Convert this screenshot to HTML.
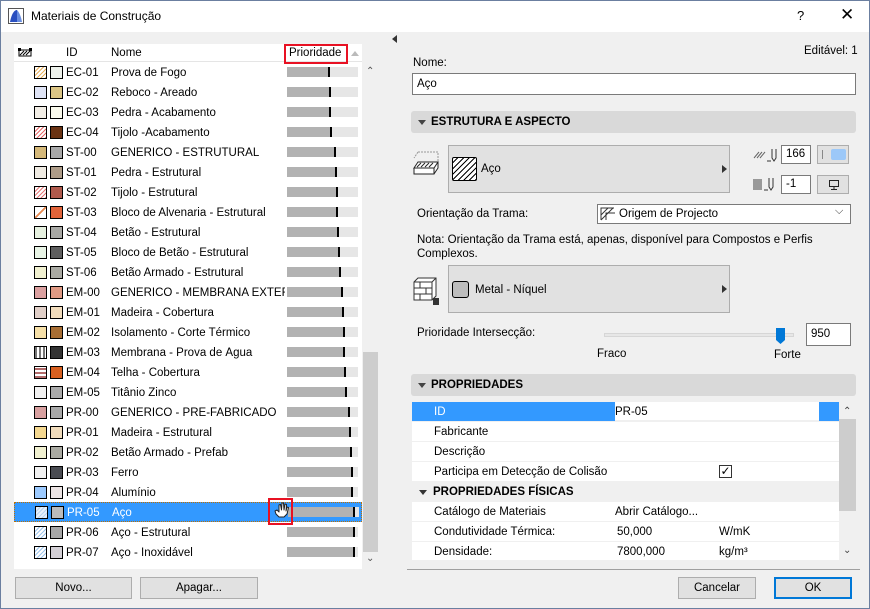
<!DOCTYPE html>
<html><head><meta charset="utf-8"><style>
*{box-sizing:border-box;margin:0;padding:0}
body{width:870px;height:609px;overflow:hidden;background:#f0f0f0;font-family:"Liberation Sans",sans-serif;font-size:11.5px;color:#000;position:relative}
.a{position:absolute}
.win{position:absolute;left:0;top:0;width:870px;height:609px;border:1px solid #6b7fa0}
.title{position:absolute;left:1px;top:1px;width:868px;height:31px;background:#fff}
.list{position:absolute;left:14px;top:44px;width:348px;height:525px;background:#fff}
.r{position:absolute;left:0;width:348px;height:20px}
.r .p,.r .f{position:absolute;top:4px;width:13px;height:13px;border:1px solid #000}
.r .p{left:20px}.r .f{left:36px}
.r .id{position:absolute;left:52px;top:5px}
.r .nm{position:absolute;left:97px;top:5px;white-space:nowrap;overflow:hidden;width:174px}
.bar{position:absolute;left:273px;top:5px;width:71px;height:10px;background:#e6e6e6}
.bar b{display:block;height:10px;background:#b2b2b2;border-right:2px solid #000}
.btn{position:absolute;background:#e1e1e1;border:1px solid #adadad;text-align:center;line-height:20px}
.inp{position:absolute;background:#fff;border:1px solid #7a7a7a;padding-left:4px}
.hdr{position:absolute;left:411px;width:445px;height:22px;background:#d9d9d9;border-radius:3px;font-weight:bold;line-height:22px;padding-left:20px}
.hdr:before{content:"";position:absolute;left:7px;top:9px;border:4px solid transparent;border-top:5px solid #444;border-bottom:0}
.pr{position:absolute;left:412px;width:427px;height:20px;background:#fff;border-bottom:1px solid #f0f0f0;line-height:21px}
.pr span{position:absolute}
</style></head><body>
<div class="win"></div>
<div class="title"></div>
<svg class="a" style="left:8px;top:8px" width="16" height="16"><rect x="0.5" y="0.5" width="15" height="15" fill="#fff" stroke="#555"/><path d="M2 14 C4 4 7 2 9 2 L9 14Z" fill="#2a4fc0"/><path d="M9 2 C11 4 13 8 14 14 L9 14Z" fill="#6a8ee0"/></svg>
<div class="a" style="left:31px;top:9px;font-size:12px">Materiais de Construção</div>
<div class="a" style="left:797px;top:8px;font-size:13px">?</div>
<div class="a" style="left:840px;top:5px;font-size:17px">✕</div>

<div class="list">
<div class="a" style="left:0;top:0;width:348px;height:18px;background:#fff;border-bottom:1px solid #e5e5e5"></div>
<svg class="a" style="left:4px;top:4px" width="14" height="10"><rect x="1" y="2" width="12" height="6" fill="none" stroke="#000"/><path d="M2 7 L6 3 M5 7 L9 3 M8 7 L12 3" stroke="#000"/><rect x="0" y="0" width="3" height="3"/><rect x="11" y="0" width="3" height="3"/></svg>
<div class="a" style="left:52px;top:3px">ID</div>
<div class="a" style="left:97px;top:3px">Nome</div>
<div class="a" style="left:270px;top:0;width:64px;height:20px;border:2px solid #e81123"></div>
<div class="a" style="left:275px;top:3px">Prioridade</div>
<div class="a" style="left:337px;top:7px;border:4px solid transparent;border-bottom:5px solid #bbb;border-top:0"></div>
</div>

<div class="list" style="background:transparent">
<div class="r" style="top:18px"><i class="p" style="background:repeating-linear-gradient(-45deg,#e9b15c 0 1px,#fff 1px 3px)"></i><i class="f" style="background:#eef2ec"></i><span class="id">EC-01</span><span class="nm">Prova de Fogo</span><b class="bar"><b style="width:43px"></b></b></div>
<div class="r" style="top:38px"><i class="p" style="background:#dfe4f6"></i><i class="f" style="background:#dcc686"></i><span class="id">EC-02</span><span class="nm">Reboco - Areado</span><b class="bar"><b style="width:44px"></b></b></div>
<div class="r" style="top:58px"><i class="p" style="background:#f2eee6"></i><i class="f" style="background:#fbfbee"></i><span class="id">EC-03</span><span class="nm">Pedra - Acabamento</span><b class="bar"><b style="width:44px"></b></b></div>
<div class="r" style="top:78px"><i class="p" style="background:repeating-linear-gradient(-45deg,#e86a6a 0 1px,#fff 1px 3px)"></i><i class="f" style="background:#6a3313"></i><span class="id">EC-04</span><span class="nm">Tijolo -Acabamento</span><b class="bar"><b style="width:45px"></b></b></div>
<div class="r" style="top:98px"><i class="p" style="background:#d5b97a"></i><i class="f" style="background:#a8a8a8"></i><span class="id">ST-00</span><span class="nm">GENÉRICO - ESTRUTURAL</span><b class="bar"><b style="width:49px"></b></b></div>
<div class="r" style="top:118px"><i class="p" style="background:#efebe3"></i><i class="f" style="background:#ae9c88"></i><span class="id">ST-01</span><span class="nm">Pedra - Estrutural</span><b class="bar"><b style="width:50px"></b></b></div>
<div class="r" style="top:138px"><i class="p" style="background:repeating-linear-gradient(-45deg,#e87a7a 0 1px,#fff 1px 3px)"></i><i class="f" style="background:#b05a4c"></i><span class="id">ST-02</span><span class="nm">Tijolo - Estrutural</span><b class="bar"><b style="width:51px"></b></b></div>
<div class="r" style="top:158px"><i class="p" style="background:linear-gradient(-45deg,#fff 45%,#e98a50 45% 55%,#fff 55%)"></i><i class="f" style="background:#e2643a"></i><span class="id">ST-03</span><span class="nm">Bloco de Alvenaria - Estrutural</span><b class="bar"><b style="width:51px"></b></b></div>
<div class="r" style="top:178px"><i class="p" style="background:#e6f1e0"></i><i class="f" style="background:#a8a8a4"></i><span class="id">ST-04</span><span class="nm">Betão - Estrutural</span><b class="bar"><b style="width:52px"></b></b></div>
<div class="r" style="top:198px"><i class="p" style="background:#e8f4e6"></i><i class="f" style="background:#5e5e5e"></i><span class="id">ST-05</span><span class="nm">Bloco de Betão - Estrutural</span><b class="bar"><b style="width:53px"></b></b></div>
<div class="r" style="top:218px"><i class="p" style="background:#f0f0d0"></i><i class="f" style="background:#a9a9a2"></i><span class="id">ST-06</span><span class="nm">Betão Armado - Estrutural</span><b class="bar"><b style="width:54px"></b></b></div>
<div class="r" style="top:238px"><i class="p" style="background:#dba0a0"></i><i class="f" style="background:#e09a84"></i><span class="id">EM-00</span><span class="nm">GENÉRICO - MEMBRANA EXTERIOR</span><b class="bar"><b style="width:56px"></b></b></div>
<div class="r" style="top:258px"><i class="p" style="background:#e0cfc8"></i><i class="f" style="background:#f2dcbc"></i><span class="id">EM-01</span><span class="nm">Madeira - Cobertura</span><b class="bar"><b style="width:57px"></b></b></div>
<div class="r" style="top:278px"><i class="p" style="background:#f6e0a8"></i><i class="f" style="background:#a86e34"></i><span class="id">EM-02</span><span class="nm">Isolamento - Corte Térmico</span><b class="bar"><b style="width:58px"></b></b></div>
<div class="r" style="top:298px"><i class="p" style="background:repeating-linear-gradient(90deg,#777 0 2px,#fff 2px 4px)"></i><i class="f" style="background:#333"></i><span class="id">EM-03</span><span class="nm">Membrana - Prova de Água</span><b class="bar"><b style="width:58px"></b></b></div>
<div class="r" style="top:318px"><i class="p" style="background:repeating-linear-gradient(0deg,#b36b6b 0 2px,#fff 2px 4px)"></i><i class="f" style="background:#d86020"></i><span class="id">EM-04</span><span class="nm">Telha - Cobertura</span><b class="bar"><b style="width:59px"></b></b></div>
<div class="r" style="top:338px"><i class="p" style="background:#f0f0f0"></i><i class="f" style="background:#aaa"></i><span class="id">EM-05</span><span class="nm">Titânio Zinco</span><b class="bar"><b style="width:60px"></b></b></div>
<div class="r" style="top:358px"><i class="p" style="background:#d8a0a0"></i><i class="f" style="background:#a8a8a8"></i><span class="id">PR-00</span><span class="nm">GENÉRICO - PRÉ-FABRICADO</span><b class="bar"><b style="width:63px"></b></b></div>
<div class="r" style="top:378px"><i class="p" style="background:#f4d890"></i><i class="f" style="background:#f1dcbc"></i><span class="id">PR-01</span><span class="nm">Madeira - Estrutural</span><b class="bar"><b style="width:64px"></b></b></div>
<div class="r" style="top:398px"><i class="p" style="background:#f0f0d0"></i><i class="f" style="background:#aaaaa2"></i><span class="id">PR-02</span><span class="nm">Betão Armado - Prefab</span><b class="bar"><b style="width:65px"></b></b></div>
<div class="r" style="top:418px"><i class="p" style="background:#f0f0f0"></i><i class="f" style="background:#4a4c52"></i><span class="id">PR-03</span><span class="nm">Ferro</span><b class="bar"><b style="width:66px"></b></b></div>
<div class="r" style="top:438px"><i class="p" style="background:#9ccaff"></i><i class="f" style="background:#ece4e4"></i><span class="id">PR-04</span><span class="nm">Alumínio</span><b class="bar"><b style="width:66px"></b></b></div>
<div class="r" style="top:458px;background:#3399ff;border:1px dotted #c07000;color:#fff"><i class="p" style="top:3px;background:repeating-linear-gradient(-45deg,#b8d4f0 0 1px,#e8f0fa 1px 3px)"></i><i class="f" style="top:3px;background:#bbb"></i><span class="id" style="top:4px">PR-05</span><span class="nm" style="top:4px">Aço</span><b class="bar" style="top:4px"><b style="width:67px"></b></b></div>
<div class="r" style="top:478px"><i class="p" style="background:repeating-linear-gradient(-45deg,#9cc4ec 0 1px,#fff 1px 3px)"></i><i class="f" style="background:#a6a6a6"></i><span class="id">PR-06</span><span class="nm">Aço - Estrutural</span><b class="bar"><b style="width:68px"></b></b></div>
<div class="r" style="top:498px"><i class="p" style="background:repeating-linear-gradient(-45deg,#9cc4ec 0 1px,#fff 1px 3px)"></i><i class="f" style="background:#d4d0d6"></i><span class="id">PR-07</span><span class="nm">Aço - Inoxidável</span><b class="bar"><b style="width:68px"></b></b></div>
</div>
<div class="a" style="left:268px;top:498px;width:25px;height:27px;border:2px solid #e81123"></div>
<svg class="a" style="left:274px;top:502px" width="15" height="16"><path d="M2 12 L1 9 L3 8 L5 10 L5 3 L6.5 2.5 L7.5 8 L8 1 L9.5 1 L10 8 L11 2 L12.5 2.5 L12 9 L13 5 L14.5 5.5 L13 12 L10 15 L5 15Z" fill="#fff" stroke="#222" stroke-linejoin="round"/></svg>

<div class="a" style="left:363px;top:62px;width:15px;height:507px;background:#f0f0f0"></div>
<div class="a" style="left:363px;top:352px;width:15px;height:200px;background:#cdcdcd"></div>
<div class="a" style="left:366px;top:66px;font-size:10px;color:#555">⌃</div>
<div class="a" style="left:366px;top:553px;font-size:10px;color:#555">⌄</div>
<div class="a" style="left:392px;top:35px;border:4px solid transparent;border-right:5px solid #333;border-left:0"></div>

<div class="btn" style="left:15px;top:577px;width:117px;height:22px">Novo...</div>
<div class="btn" style="left:140px;top:577px;width:118px;height:22px">Apagar...</div>

<div class="a" style="left:804px;top:45px">Editável: 1</div>
<div class="a" style="left:413px;top:57px">Nome:</div>
<div class="inp" style="left:412px;top:73px;width:444px;height:22px;line-height:20px">Aço</div>
<div class="hdr" style="top:111px">ESTRUTURA E ASPECTO</div>

<svg class="a" style="left:413px;top:150px" width="28" height="32"><path d="M5 2 L25 2 L25 14 M5 2 L1 8" stroke="#999" stroke-dasharray="2 1" fill="none"/><path d="M1 18 L5 12 L25 12 L21 18Z M1 18 L1 24 L21 24 L21 18 M21 24 L25 18 L25 12" fill="#fff" stroke="#222"/><path d="M4 17 L8 13 M8 17 L12 13 M12 17 L16 13 M16 17 L20 13" stroke="#222"/></svg>
<div class="btn" style="left:448px;top:145px;width:282px;height:48px"></div>
<div class="a" style="left:452px;top:157px;width:25px;height:24px;border:1px solid #000;border-radius:2px;background:repeating-linear-gradient(-45deg,#000 0 1px,#fff 1px 4px)"></div>
<div class="a" style="left:481px;top:163px">Aço</div>
<div class="a" style="left:722px;top:165px;border:4px solid transparent;border-left:5px solid #333;border-right:0"></div>

<svg class="a" style="left:753px;top:147px" width="26" height="16"><path d="M1 11 L6 5 M4 11 L9 5 M7 11 L12 5" stroke="#666"/><path d="M14 14 L18 14 M19 2 L19 11 L21 14 L23 11 L23 2" stroke="#333" fill="none"/></svg>
<div class="inp" style="left:781px;top:145px;width:30px;height:19px;line-height:17px">166</div>
<div class="btn" style="left:817px;top:145px;width:32px;height:19px"><div class="a" style="left:4px;top:4px;width:1px;height:9px;background:#888"></div><div class="a" style="left:13px;top:3px;width:15px;height:11px;background:#9cc8f8;border-radius:2px"></div></div>
<div class="a" style="left:753px;top:179px;width:9px;height:11px;background:#999"></div>
<svg class="a" style="left:763px;top:177px" width="16" height="16"><path d="M1 13 L5 13 M6 1 L6 10 L8 13 L10 10 L10 1" stroke="#333" fill="none"/></svg>
<div class="inp" style="left:781px;top:175px;width:30px;height:19px;line-height:17px">-1</div>
<div class="btn" style="left:817px;top:175px;width:32px;height:19px"><svg class="a" style="left:10px;top:3px" width="12" height="12"><rect x="1.5" y="1.5" width="9" height="6" fill="none" stroke="#222"/><path d="M6 8 L6 10 M3 10.5 L9 10.5" stroke="#222"/></svg></div>

<div class="a" style="left:417px;top:208px">Orientação da Trama:</div>
<div class="inp" style="left:597px;top:204px;width:254px;height:20px"></div>
<svg class="a" style="left:600px;top:207px" width="16" height="14"><path d="M1 13 L1 1 L14 1 M1 8 L8 1 M1 13 L13 1 M6 13 L6 6 L15 6" stroke="#333" fill="none"/></svg>
<div class="a" style="left:619px;top:208px">Origem de Projecto</div>
<div class="a" style="left:835px;top:205px;font-size:11px;color:#333">⌵</div>
<div class="a" style="left:417px;top:233px;line-height:14px">Nota: Orientação da Trama está, apenas, disponível para Compostos e Perfis<br>Complexos.</div>

<svg class="a" style="left:413px;top:276px" width="30" height="30"><path d="M1 6 L5 2 L23 2 L23 20 L19 24 L1 24Z M1 6 L19 6 L19 24 M19 6 L23 2" fill="#fff" stroke="#333"/><path d="M1 12 L19 12 M1 18 L19 18 M7 6 L7 12 M13 12 L13 18 M7 18 L7 24" stroke="#333"/><rect x="20" y="22" width="6" height="7" fill="#333"/></svg>
<div class="btn" style="left:448px;top:265px;width:282px;height:48px"></div>
<div class="a" style="left:452px;top:281px;width:17px;height:17px;border:1px solid #000;border-radius:3px;background:#bdbdbd"></div>
<div class="a" style="left:475px;top:284px">Metal - Níquel</div>
<div class="a" style="left:722px;top:285px;border:4px solid transparent;border-left:5px solid #333;border-right:0"></div>

<div class="a" style="left:417px;top:327px">Prioridade Intersecção:</div>
<div class="a" style="left:604px;top:333px;width:190px;height:4px;background:#e7e7e7;border:1px solid #d6d6d6"></div>
<svg class="a" style="left:776px;top:328px" width="9" height="17"><path d="M0 0 L9 0 L9 12 L4.5 16 L0 12Z" fill="#0078d7"/></svg>
<div class="inp" style="left:806px;top:323px;width:45px;height:23px;line-height:21px">950</div>
<div class="a" style="left:597px;top:348px">Fraco</div>
<div class="a" style="left:774px;top:349px">Forte</div>

<div class="hdr" style="top:374px">PROPRIEDADES</div>
<div class="pr" style="top:402px;height:19px"><span style="left:0;top:0;width:203px;height:19px;background:#3399ff;color:#fff;padding-left:22px">ID</span><span style="left:203px">PR-05</span><span style="left:407px;top:0;width:20px;height:19px;background:#3399ff"></span></div>
<div class="pr" style="top:422px"><span style="left:22px">Fabricante</span></div>
<div class="pr" style="top:442px"><span style="left:22px">Descrição</span></div>
<div class="pr" style="top:462px"><span style="left:22px">Participa em Detecção de Colisão</span><span style="left:307px;top:3px;width:13px;height:13px;border:1px solid #333;font-size:12px;line-height:11px;text-align:center">✓</span></div>
<div class="pr" style="top:482px;background:#f0f0f0;font-weight:bold"><span style="left:7px;top:8px;border:4px solid transparent;border-top:5px solid #333;border-bottom:0"></span><span style="left:21px">PROPRIEDADES FÍSICAS</span></div>
<div class="pr" style="top:502px"><span style="left:22px">Catálogo de Materiais</span><span style="left:203px">Abrir Catálogo...</span></div>
<div class="pr" style="top:522px"><span style="left:22px">Condutividade Térmica:</span><span style="left:205px">50,000</span><span style="left:307px">W/mK</span></div>
<div class="pr" style="top:542px;height:19px"><span style="left:22px">Densidade:</span><span style="left:205px">7800,000</span><span style="left:307px">kg/m³</span></div>
<div class="a" style="left:839px;top:402px;width:17px;height:159px;background:#f0f0f0"></div>
<div class="a" style="left:839px;top:419px;width:17px;height:92px;background:#cdcdcd"></div>
<div class="a" style="left:843px;top:406px;font-size:10px;color:#444">⌃</div>
<div class="a" style="left:843px;top:545px;font-size:10px;color:#444">⌄</div>

<div class="a" style="left:407px;top:569px;width:453px;height:1px;background:#a0a0a0"></div>
<div class="btn" style="left:678px;top:577px;width:78px;height:22px">Cancelar</div>
<div class="btn" style="left:774px;top:577px;width:78px;height:22px;border:2px solid #0078d7;line-height:18px">OK</div>
</body></html>
